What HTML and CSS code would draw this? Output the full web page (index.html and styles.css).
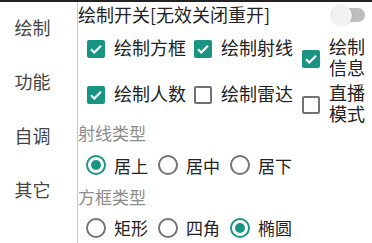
FILE: index.html
```html
<!DOCTYPE html>
<html lang="zh">
<head>
<meta charset="utf-8">
<link rel="stylesheet" href="styles.css">
</head>
<body>
<div class="app">
  <nav class="nav">
    <div class="nav-item">绘制</div>
    <div class="nav-item">功能</div>
    <div class="nav-item">自调</div>
    <div class="nav-item">其它</div>
  </nav>
  <main class="main">
    <div class="title-row">
      <span class="title">绘制开关[无效关闭重开]</span>
      <span class="switch"><span class="track"></span><span class="thumb"></span></span>
    </div>
    <div class="cb-grid">
      <div class="cb"><span class="box checked"><svg viewBox="0 0 18 18" width="18" height="18"><path d="M4 9.2l3.3 3.3L14 5.8" fill="none" stroke="#fff" stroke-width="2.2"/></svg></span><span class="cb-text">绘制方框</span></div>
      <div class="cb"><span class="box checked"><svg viewBox="0 0 18 18" width="18" height="18"><path d="M4 9.2l3.3 3.3L14 5.8" fill="none" stroke="#fff" stroke-width="2.2"/></svg></span><span class="cb-text">绘制射线</span></div>
      <div class="cb"><span class="box checked"><svg viewBox="0 0 18 18" width="18" height="18"><path d="M4 9.2l3.3 3.3L14 5.8" fill="none" stroke="#fff" stroke-width="2.2"/></svg></span><span class="cb-text wrap">绘制信息</span></div>
      <div class="cb"><span class="box checked"><svg viewBox="0 0 18 18" width="18" height="18"><path d="M4 9.2l3.3 3.3L14 5.8" fill="none" stroke="#fff" stroke-width="2.2"/></svg></span><span class="cb-text">绘制人数</span></div>
      <div class="cb"><span class="box"></span><span class="cb-text">绘制雷达</span></div>
      <div class="cb"><span class="box"></span><span class="cb-text wrap">直播模式</span></div>
    </div>
    <div class="section-label">射线类型</div>
    <div class="radio-row row-a">
      <div class="radio"><span class="circle on"></span><span class="r-text">居上</span></div>
      <div class="radio"><span class="circle"></span><span class="r-text">居中</span></div>
      <div class="radio"><span class="circle"></span><span class="r-text">居下</span></div>
    </div>
    <div class="section-label">方框类型</div>
    <div class="radio-row row-b">
      <div class="radio"><span class="circle"></span><span class="r-text">矩形</span></div>
      <div class="radio"><span class="circle"></span><span class="r-text">四角</span></div>
      <div class="radio"><span class="circle on"></span><span class="r-text">椭圆</span></div>
    </div>
  </main>
</div>
</body>
</html>
```

FILE: styles.css
```css
* { box-sizing: border-box; }
html, body { margin: 0; padding: 0; background: #fff; }
body {
  width: 372px;
  height: 243px;
  overflow: hidden;
  border-top: 2px solid #222;
  font-family: "Noto Sans CJK SC", "Noto Sans", sans-serif;
  color: #222;
}
.app {
  display: flex;
  height: 241px;
}
.nav {
  width: 78px;
  flex: none;
  border-right: 1px solid #c8c8c8;
  display: flex;
  flex-direction: column;
}
.nav-item {
  height: 54px;
  display: flex;
  align-items: center;
  justify-content: center;
  font-size: 18px;
  color: #444;
  padding-right: 12px;
  padding-bottom: 4px;
}
.main {
  flex: 1;
  min-width: 0;
}
.title-row {
  height: 34px;
  display: flex;
  justify-content: space-between;
  align-items: flex-start;
  padding-right: 7px;
}
.title {
  font-size: 18px;
  line-height: 24px;
  color: #222;
}
.switch {
  position: relative;
  width: 34px;
  height: 20px;
  margin-top: 3px;
}
.track {
  position: absolute;
  left: 0;
  top: 3px;
  width: 34px;
  height: 14px;
  border-radius: 7px;
  background: #bdbdbd;
}
.thumb {
  position: absolute;
  left: 0;
  top: 0;
  width: 21px;
  height: 21px;
  border-radius: 50%;
  background: #f2f2f2;
  box-shadow: 0 0 2px rgba(0,0,0,0.15);
}
.cb-grid {
  display: grid;
  grid-template-columns: 107px 108px 1fr;
  row-gap: 4px;
  align-items: start;
}
.cb {
  display: flex;
  align-items: center;
  padding-left: 9px;
}
.box {
  width: 18px;
  height: 18px;
  flex: none;
  border: 2px solid #737373;
  border-radius: 2px;
  margin-right: 9px;
  margin-top: 4px;
  display: flex;
  align-items: center;
  justify-content: center;
}
.box.checked {
  border: none;
  background: #1a9482;
}
.cb-text {
  font-size: 18px;
  line-height: 21px;
  color: #222;
  white-space: nowrap;
}
.cb-text.wrap {
  white-space: normal;
}
.section-label {
  font-size: 17px;
  line-height: 18px;
  color: #8c8c8c;
}
.radio-row {
  display: flex;
  align-items: center;
  padding-left: 8px;
  gap: 10px;
}
.row-a { height: 46px; }
.row-b { height: 43px; }
.radio {
  display: flex;
  align-items: center;
}
.circle {
  width: 20px;
  height: 20px;
  flex: none;
  border: 2px solid #737373;
  border-radius: 50%;
  margin-right: 8px;
  display: flex;
  align-items: center;
  justify-content: center;
}
.circle.on {
  border-color: #1a9482;
}
.circle.on::after {
  content: "";
  width: 10px;
  height: 10px;
  border-radius: 50%;
  background: #1a9482;
}
.r-text {
  font-size: 17px;
  line-height: 21px;
  color: #222;
}
```
